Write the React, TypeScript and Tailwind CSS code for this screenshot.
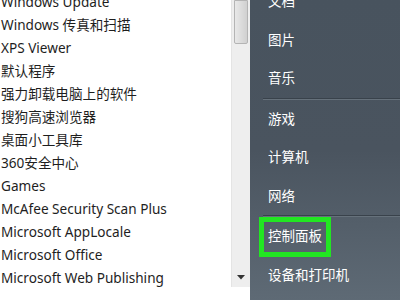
const programs = [
  'Windows Update',
  'Windows 传真和扫描',
  'XPS Viewer',
  '默认程序',
  '强力卸载电脑上的软件',
  '搜狗高速浏览器',
  '桌面小工具库',
  '360安全中心',
  'Games',
  'McAfee Security Scan Plus',
  'Microsoft AppLocale',
  'Microsoft Office',
  'Microsoft Web Publishing',
]

const Separator = () => (
  <div className="ml-[13px]">
    <div className="h-px bg-[#39424b]" />
    <div className="h-px bg-[#66717b]" />
  </div>
)

const Item = ({ label, boxed }: { label: string; boxed?: boolean }) => (
  <div className="h-[38.5px] flex items-center pl-[18px] text-[13.5px] text-white whitespace-nowrap">
    {boxed ? (
      <span className="-ml-[9px] h-[40px] inline-flex items-center border-[5px] border-[#22e622] px-[4px] relative z-10">
        {label}
      </span>
    ) : (
      <span>{label}</span>
    )}
  </div>
)

export default function App() {
  return (
    <div
      className="w-[400px] h-[300px] flex overflow-hidden bg-white"
      style={{ fontFamily: '"Noto Sans", "Noto Sans CJK SC", sans-serif' }}
    >
      <div className="w-[250px] flex flex-col">
        <div className="h-[287px] flex">
          <div className="flex-1 overflow-hidden">
            <div className="-mt-[9px] pl-[1px]">
              {programs.map((p) => (
                <div key={p} className="h-[23px] flex items-center text-[13.6px] text-[#1e1e1e] whitespace-nowrap">
                  {p}
                </div>
              ))}
            </div>
          </div>
          <div className="w-[19px] bg-[#eeeeee] border-l border-[#e4e4e4] flex flex-col items-center">
            <div className="w-[14px] h-[44px] bg-gradient-to-r from-[#e8e8e8] via-[#dcdcdc] to-[#d0d0d0] border border-[#b4b4b4] rounded-b-[2px]" />
            <div className="flex-1" />
            <svg width="8" height="5" viewBox="0 0 8 5" className="mb-[7px]">
              <path d="M0 0 L8 0 L4 4.5 Z" fill="#333" />
            </svg>
          </div>
        </div>
      </div>
      <div className="flex-1 bg-gradient-to-b from-[#48535e] via-[#4a545f] to-[#5e6a75]">
        <div className="-mt-[17.75px]">
          <Item label="文档" />
          <Item label="图片" />
          <Item label="音乐" />
          <Separator />
          <Item label="游戏" />
          <Item label="计算机" />
          <Item label="网络" />
          <Separator />
          <Item label="控制面板" boxed />
          <Item label="设备和打印机" />
        </div>
      </div>
    </div>
  )
}
